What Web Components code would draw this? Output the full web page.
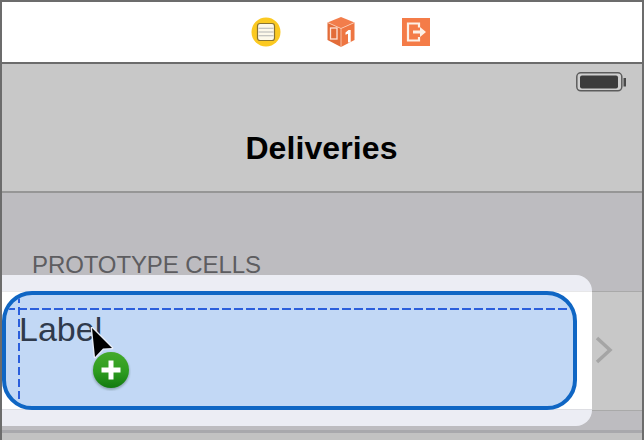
<!DOCTYPE html>
<html><head><meta charset="utf-8"><style>
html,body{margin:0;padding:0;background:#c8c8c8}
body{width:644px;height:440px;overflow:hidden;font-family:"Liberation Sans",Arial,sans-serif}
</style></head><body>
<sb-canvas>
<sb-dock></sb-dock>
<sb-nav title="Deliveries"></sb-nav>
<sb-table header="PROTOTYPE CELLS"></sb-table>
<sb-cursor></sb-cursor>
<sb-plus></sb-plus>
</sb-canvas>
<script>
function def(name, html){
  customElements.define(name, class extends HTMLElement{
    constructor(){super();this.attachShadow({mode:'open'}).innerHTML=typeof html==='function'?html(this):html;}
  });
}
def('sb-canvas',`<style>:host{display:flex;flex-direction:column;width:644px;height:440px;box-sizing:border-box;border:solid #6c6c6c;border-width:2px 2px 0 2px;position:relative;overflow:hidden}</style><slot></slot>`);
def('sb-dock',`<style>:host{display:flex;flex:none;height:60px;background:#fff;border-bottom:2px solid #6c6c6c;align-items:center;justify-content:center;gap:45px;padding-left:37px}
svg{display:block;flex:none}svg:last-child{margin-left:1px}</style>
<svg width="30" height="30" viewBox="0 0 30 30"><circle cx="15" cy="15" r="14.5" fill="#fbc921"/><rect x="6.500" y="6.500" width="17" height="17" rx="2.500" fill="#fdf8ea" stroke="#8a7430" stroke-width="1.200"/><path d="M7.500 11.200h15M7.500 15h15M7.500 18.800h15" stroke="#b4b4b4" stroke-width="1.100"/></svg>
<svg width="30" height="32" viewBox="0 0 30 32"><path d="M15 1 1.500 6.500 15 12.500 28.500 6.500z" fill="#f27d4b"/><path d="M1.500 6.500V24L15 31V12.500z" fill="#e36c39"/><path d="M28.500 6.500V24L15 31V12.500z" fill="#ee7642"/><path d="M1.500 6.500 15 12.500 28.500 6.500M15 12.500V31" fill="none" stroke="#fbd2bd" stroke-width=".8"/><rect x="4.500" y="12" width="6.500" height="11" fill="none" stroke="#fde4d8" stroke-width="1.300"/><path d="M19.500 16.500l3-2.500h2.200v12.500h-2.700V17.800l-2.500 1z" fill="#fff"/></svg>
<svg width="28" height="28" viewBox="0 0 28 28"><rect width="28" height="28" fill="#f47c48"/><path d="M17 9.500V5.500H6v17h11V19" fill="none" stroke="#fdf0e6" stroke-width="2.200"/><path d="M11 12.500h7V9l6 5-6 5v-3.500h-7z" fill="#fdf0e6"/></svg>`);
def('sb-battery',`<style>:host{display:block;width:50px;height:20px}svg{display:block}</style><svg width="50" height="20" viewBox="0 0 50 20"><rect x=".8" y=".8" width="45" height="18" rx="4" fill="#cfcfcf" stroke="#5c5c5c" stroke-width="1.500"/><rect x="4" y="3.500" width="38" height="13" rx="2" fill="#3c3c3c"/><rect x="47.500" y="6" width="2.500" height="8.500" fill="#4a4a4a"/></svg>`);
def('sb-nav',el=>`<style>:host{display:flex;flex:none;flex-direction:column;height:127px;background:#c8c8c8;border-bottom:2px solid #969696}
.status{display:flex;justify-content:flex-end;padding:8px 16px 0 0;height:20px;flex:none}
.title{display:flex;align-items:center;justify-content:center;font:700 32px/37px "Liberation Sans",Arial,sans-serif;letter-spacing:.1px;color:#000;padding:37px 1px 0 0;height:38px;flex:none}
</style><div class="status"><sb-battery></sb-battery></div><div class="title">${el.getAttribute('title')}</div>`);
def('sb-plus',`<style>:host{display:block;position:absolute;left:89px;top:349px;width:40px;height:40px}svg{display:block}</style><svg width="40" height="40" viewBox="0 0 40 40"><defs><linearGradient id="g" x1="0" y1="0" x2="0" y2="1"><stop offset="0" stop-color="#45aa2c"/><stop offset=".55" stop-color="#2d9c1f"/><stop offset="1" stop-color="#127a0f"/></linearGradient><filter id="b" x="-20%" y="-20%" width="140%" height="140%"><feGaussianBlur stdDeviation="1"/></filter></defs><circle cx="20" cy="20.500" r="18.500" fill="#2f4a3a" opacity=".35" filter="url(#b)"/><circle cx="20" cy="19" r="18" fill="url(#g)"/><path d="M20 9.500v19M10.500 19h19" stroke="#fff" stroke-width="5"/></svg>`);
def('sb-cursor',`<style>:host{display:block;position:absolute;left:87px;top:325px;width:28px;height:38px}svg{display:block}</style><svg width="28" height="38" viewBox="0 0 28 38"><path d="M3 1 23 21 14 21.500 6 30z" fill="#000" stroke="#e8eef8" stroke-width="2.600" stroke-linejoin="round" paint-order="stroke"/></svg>`);
def('sb-table',el=>`<style>:host{display:block;flex:1;position:relative;background:#bdbcc0}
.hdr{height:98px;box-sizing:border-box;padding-top:59px;padding-left:30px;font:400 24px/26px "Liberation Sans",Arial,sans-serif;letter-spacing:-.1px;color:#5d5d60}
.cell{height:116px;background:#c8c8c8;border-top:1px solid #a9a9a9;border-bottom:1px solid #a9a9a9;display:flex;align-items:center;justify-content:flex-end;padding:0 29px 2px 0}
.foot{height:19px;border-bottom:3px solid #a8a8ac}
.rest{height:10px;background:#c2c2c2}
.chev{display:block}
.drag{position:absolute;left:-2px;top:82px;width:592px;height:151px;border-radius:0 16px 16px 0;background:linear-gradient(#ecedf4 0,#ecedf4 16px,#cfcfd2 16px,#fff 17px,#fff 134px,#cfcfd2 134px,#ecedf4 135px);box-sizing:border-box;padding:16px 15px 16px 2px}
.sel{height:119px;box-sizing:border-box;border:4px solid #0f66c4;border-radius:30px;background:#c2d8f5;position:relative;overflow:hidden}
.guide-h{position:absolute;left:0;right:0;top:13px;height:2px;background:repeating-linear-gradient(90deg,#2b5fdc 0 9px,transparent 9px 12px)}
.guide-v{position:absolute;top:0;bottom:0;left:12px;width:2px;background:repeating-linear-gradient(180deg,#2b5fdc 0 8px,transparent 8px 12px)}
.lbl{position:absolute;left:13px;top:14px;font:400 34px/40px "Liberation Sans",Arial,sans-serif;color:#2f3a4c}
</style><div class="hdr">${el.getAttribute('header')}</div>
<div class="cell"><svg class="chev" width="18" height="30" viewBox="0 0 18 30"><path d="M2 3l13 12L2 27" fill="none" stroke="#a5a5a5" stroke-width="3.500"/></svg></div>
<div class="foot"></div><div class="rest"></div>
<div class="drag"><div class="sel"><div class="guide-h"></div><div class="guide-v"></div><div class="lbl">Label</div></div></div>`);
</script>
</body></html>
